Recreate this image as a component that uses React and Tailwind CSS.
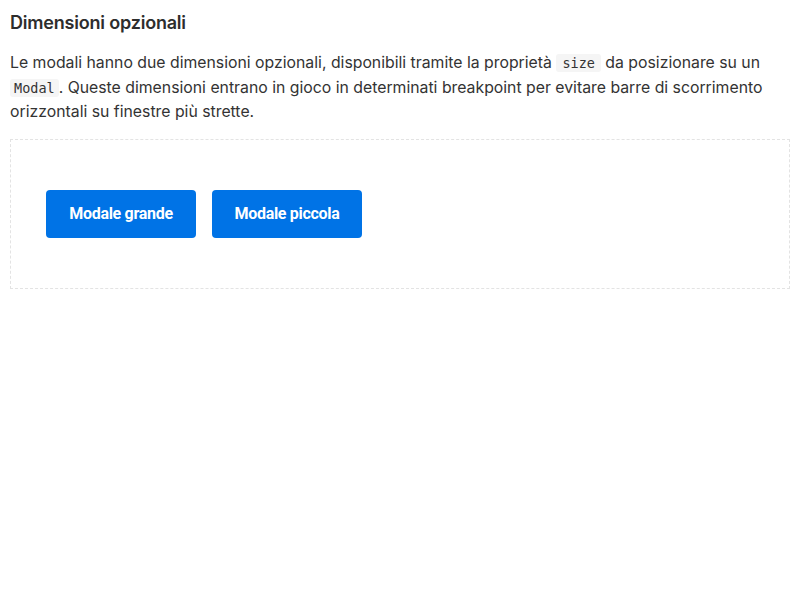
import React from "react";

function App() {
  return (
    <div className="px-[10px] pt-[10px] font-['Inter',sans-serif] text-[#2d2d2d]">
      <h4 className="text-[18px] leading-[26px] font-semibold tracking-[-0.2px] text-[#2d2d2d]">
        Dimensioni opzionali
      </h4>
      <p className="mt-[15px] text-[15.8px] leading-[24.5px] text-[#333]">
        Le modali hanno due dimensioni opzionali, disponibili tramite la proprietà{" "}
        <code className="rounded-[3px] bg-[#f5f5f5] px-[6px] py-[1px] font-['DejaVu_Sans_Mono',monospace] text-[13.5px] text-[#333]">
          size
        </code>{" "}
        da posizionare su un{" "}
        <code className="rounded-[3px] bg-[#f5f5f5] px-[4px] py-[1px] font-['DejaVu_Sans_Mono',monospace] text-[13.5px] text-[#333]">
          Modal
        </code>
        . Queste dimensioni entrano in gioco in determinati breakpoint per evitare barre di scorrimento
        orizzontali su finestre più strette.
      </p>
      <div className="mt-[14px] flex h-[150px] w-[780px] items-center gap-[16px] border border-dashed border-[#e3e3e3] pl-[35px]">
        <button className="h-[48px] w-[150px] rounded-[4px] bg-[#0073e6] font-['Roboto',sans-serif] text-[16px] font-bold tracking-[-0.3px] text-white">
          Modale grande
        </button>
        <button className="h-[48px] w-[150px] rounded-[4px] bg-[#0073e6] font-['Roboto',sans-serif] text-[16px] font-bold tracking-[-0.3px] text-white">
          Modale piccola
        </button>
      </div>
    </div>
  );
}

export default App;
